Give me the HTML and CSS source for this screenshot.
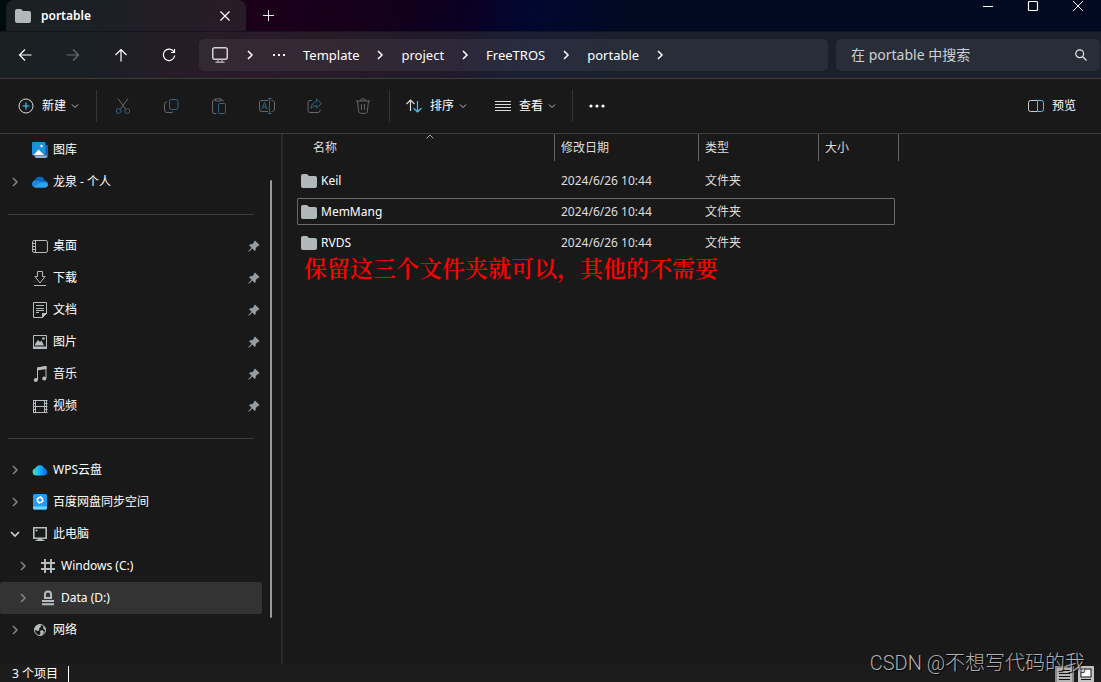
FILE: index.html
```html
<!DOCTYPE html>
<html lang="zh-CN">
<head>
<meta charset="utf-8">
<title>portable</title>
<link rel="stylesheet" href="styles.css">
</head>
<body>
<svg class="defs" aria-hidden="true">
  <symbol id="folder" viewBox="0 0 16 14"><path d="M0 2Q0 0 2 0H5.500Q6.500 0 7 1L8 2H14Q16 2 16 4V12Q16 14 14 14H2Q0 14 0 12Z" fill="#b2b8ba"/></symbol>
  <symbol id="right" viewBox="0 0 10 10"><path d="M3 1 7 5 3 9" fill="none" stroke="currentColor" stroke-width="1.500"/></symbol>
  <symbol id="down" viewBox="0 0 10 10"><path d="M1 3 5 7 9 3" fill="none" stroke="currentColor" stroke-width="1.700"/></symbol>
  <symbol id="small-down" viewBox="0 0 8 8"><path d="M1 2.500 4 5.500 7 2.500" fill="none" stroke="currentColor"/></symbol>
  <symbol id="pin" viewBox="0 0 12 12"><path d="M7 0.500 11.500 5 10.500 6 9.800 5.900 7.800 8 7.700 10 6.700 11 4.200 8.500 1 11.700.3 11 3.500 7.800 1 5.300 2 4.300 4 4.200 6.100 2.200 6 1.500Z" fill="#939da3"/></symbol>
</svg>
<div class="window">
  <header class="chrome">
    <div class="titlebar">
      <div class="tab">
        <svg class="folder"><use href="#folder"/></svg>
        <span class="tab-name">portable</span>
        <button class="bare" aria-label="关闭标签页"><svg width="10" height="10" viewBox="0 0 10 10"><path d="M.5.5 9.500 9.500M9.500.5.500 9.500" stroke="#fff" stroke-width="1.200"/></svg></button>
      </div>
      <button class="bare new-tab" aria-label="新标签页"><svg width="11" height="11" viewBox="0 0 11 11"><path d="M5.500 0V11M0 5.500H11" stroke="#e8e8ee"/></svg></button>
      <div class="win-controls">
        <button class="bare" aria-label="最小化"><svg width="12" height="12" viewBox="0 0 12 12"><path d="M1 6.500H11" stroke="#fff"/></svg></button>
        <button class="bare" aria-label="最大化"><svg width="12" height="12" viewBox="0 0 12 12"><rect x="1.500" y="1.500" width="9" height="9" rx="1" fill="none" stroke="#fff" stroke-width="1.200"/></svg></button>
        <button class="bare" aria-label="关闭"><svg width="12" height="12" viewBox="0 0 12 12"><path d="M1 1 11 11M11 1 1 11" stroke="#fff"/></svg></button>
      </div>
    </div>
    <div class="navbar">
      <div class="history">
        <button class="bare" aria-label="后退"><svg width="14" height="14" viewBox="0 0 14 14"><path d="M13.500 7H1.500M7 1.500 1.500 7 7 12.500"/></svg></button>
        <button class="bare" aria-label="前进" disabled><svg width="14" height="14" viewBox="0 0 14 14"><path d="M.5 7H12.500M7 1.500 12.500 7 7 12.500"/></svg></button>
        <button class="bare" aria-label="上移"><svg width="14" height="14" viewBox="0 0 14 14"><path d="M7 13.500V1.500M1.500 7 7 1.500 12.500 7"/></svg></button>
        <button class="bare" aria-label="刷新"><svg width="14" height="14" viewBox="0 0 14 14"><path d="M12 4A5.700 5.700 0 1 0 12.700 7.500M12.500 1V4.500H9"/></svg></button>
      </div>
      <nav class="address" aria-label="地址">
        <svg class="computer" width="16" height="16" viewBox="0 0 16 16"><rect x=".75" y=".75" width="14.500" height="11.500" rx="2" fill="none" stroke="#d5d0d8" stroke-width="1.500"/><path d="M6 12.500V15M10 12.500V15M3.500 15.200H12.500" stroke="#aaa4ad" stroke-width="1.400"/></svg>
        <svg class="chev"><use href="#right"/></svg>
        <button class="bare" aria-label="更多位置"><svg width="12" height="4" viewBox="0 0 12 4"><path d="M0 1h2v2H0zM5 1h2v2H5zM10 1h2v2h-2z" fill="#fff"/></svg></button>
        <a href="#">Template</a><svg class="chev"><use href="#right"/></svg>
        <a href="#">project</a><svg class="chev"><use href="#right"/></svg>
        <a href="#">FreeTROS</a><svg class="chev"><use href="#right"/></svg>
        <a href="#">portable</a><svg class="chev"><use href="#right"/></svg>
      </nav>
      <label class="search">
        <input type="text" placeholder="在 portable 中搜索" aria-label="在 portable 中搜索">
        <svg width="12" height="12" viewBox="0 0 12 12"><circle cx="4.700" cy="4.700" r="3.900" fill="none" stroke="#e6e8ea" stroke-width="1.200"/><path d="M7.500 7.500 11.500 11.500" stroke="#e6e8ea" stroke-width="1.300"/></svg>
      </label>
    </div>
  </header>

  <div class="toolbar">
    <button class="tool"><svg width="16" height="16" viewBox="0 0 16 16"><circle cx="8" cy="8" r="7" stroke="#ddd"/><path d="M8 4.500V11.500M4.500 8H11.500" stroke="#4cc2ff" stroke-width="1.200"/></svg>新建<svg class="caret"><use href="#small-down"/></svg></button>
    <div class="edit-tools">
      <button class="bare" aria-label="剪切" disabled><svg width="16" height="16" viewBox="0 0 16 16"><path d="M3 .5 10.500 11M13 .5 5.500 11" stroke="#686868"/><circle cx="3.700" cy="13" r="2.400" stroke="#2d6680"/><circle cx="12.300" cy="13" r="2.400" stroke="#2d6680"/></svg></button>
      <button class="bare" aria-label="复制" disabled><svg width="16" height="16" viewBox="0 0 16 16"><rect x="6.500" y="1.500" width="8.500" height="10" rx="1.800" stroke="#2d6680"/><path d="M4 4H3.500A2 2 0 0 0 1.500 6V12A2.500 2.500 0 0 0 4 14.500H8A2 2 0 0 0 10 13.500" stroke="#686868"/></svg></button>
      <button class="bare" aria-label="粘贴" disabled><svg width="16" height="16" viewBox="0 0 16 16"><path d="M4.500 2H3A1.500 1.500 0 0 0 1.500 3.500V14A1.500 1.500 0 0 0 3 15.500H5.500M10.500 2H11A1.500 1.500 0 0 1 12.500 3.500M4.500 .8H10V3H4.500Z" stroke="#686868"/><rect x="7.500" y="5.500" width="7" height="10" rx="1" stroke="#2d6680"/></svg></button>
      <button class="bare" aria-label="重命名" disabled><svg width="16" height="16" viewBox="0 0 16 16"><path d="M9 2.500H3A2 2 0 0 0 .5 4.500V11.500A2 2 0 0 0 2.500 13.500H9M12.500 2.500A2.500 2.500 0 0 1 15.500 5V11A2.500 2.500 0 0 1 12.500 13.500" stroke="#686868"/><path d="M9 .5H12.500M10.500.5V15.500M9 15.500H12.500M2.800 11.500 5.500 4.500 8.200 11.500M3.800 9H7.200" stroke="#2d6680"/></svg></button>
      <button class="bare" aria-label="共享" disabled><svg width="16" height="16" viewBox="0 0 16 16"><path d="M5 2.500H3A2 2 0 0 0 1 4.500V12.500A2 2 0 0 0 3 14.500H11A2 2 0 0 0 13 12.500V11.500" stroke="#686868"/><path d="M9.500 1 14.500 5.500 9.500 10V7.500Q6 7.500 4 10.500 4.500 4.500 9.500 3.800Z" stroke="#2d6680"/></svg></button>
      <button class="bare" aria-label="删除" disabled><svg width="16" height="16" viewBox="0 0 16 16"><path d="M1 3H15M5.500 3Q5.500.700 8 .700T10.500 3M2.500 3 3.700 13.500Q3.900 15.300 5.500 15.300H10.500Q12.100 15.300 12.300 13.500L13.500 3M6.500 6V12M9.500 6V12" stroke="#686868"/></svg></button>
    </div>
    <div class="view-tools">
      <button class="tool"><svg width="16" height="16" viewBox="0 0 16 16"><path d="M4.500 13V2M.5 6 4.500 2 8.500 6" stroke="#ddd" stroke-width="1.200"/><path d="M11.500 3V14M7.500 10 11.500 14 15.500 10" stroke="#4cc2ff" stroke-width="1.200"/></svg>排序<svg class="caret"><use href="#small-down"/></svg></button>
      <button class="tool"><svg width="16" height="16" viewBox="0 0 16 16"><path d="M0 3.500H16M0 6.500H16M0 9.500H16M0 12.500H16" stroke="#ddd"/></svg>查看<svg class="caret"><use href="#small-down"/></svg></button>
    </div>
    <button class="bare more" aria-label="查看更多"><svg width="16" height="4" viewBox="0 0 16 4"><circle cx="2" cy="2" r="1.600" fill="#fff"/><circle cx="8" cy="2" r="1.600" fill="#fff"/><circle cx="14" cy="2" r="1.600" fill="#fff"/></svg></button>
    <button class="tool preview"><svg width="16" height="16" viewBox="0 0 16 16"><path d="M9 2.500H2.500A2 2 0 0 0 .5 4.500V11.500A2 2 0 0 0 2.500 13.500H9" stroke="#ccc"/><path d="M9.500 2.500H13.500A2 2 0 0 1 15.500 4.500V11.500A2 2 0 0 1 13.500 13.500H9.500Z" stroke="#4cc2ff"/></svg>预览</button>
  </div>

  <main class="body">
    <nav class="sidebar" aria-label="导航窗格">
      <ul class="tree">
        <li><a href="#"><span class="twist"></span><svg class="icon" viewBox="0 0 16 16"><path d="M3 3H16V14Q16 16 14 16H3Z" fill="#0c62b4"/><path d="M2 13.500H15.500L14 16H4Z" fill="#79b9ec"/><rect width="13.500" height="13.500" rx="1" fill="#1b91db"/><path d="M1.500 13 6.700 7.500 12 13Z" fill="#fff"/><circle cx="9.500" cy="4" r="1.200" fill="#fff"/></svg>图库</a></li>
        <li><a href="#"><svg class="twist"><use href="#right"/></svg><svg class="icon" viewBox="0 0 16 16"><path d="M4 13A3.800 3.800 0 0 1 3 5.700 5.200 5.200 0 0 1 12.700 6.500 3.400 3.400 0 0 1 12.500 13.500Z" fill="#0868bf"/><path d="M3.500 13.500A3.500 3.500 0 0 1 0 9.500Q1 6 4.500 6.500L16 10Q15.500 13.500 12.500 13.500Z" fill="#168ae0"/><path d="M2 13 9 8.500Q14 7 16 10.500 15.500 13.500 12.500 13.500H3.500Z" fill="#2ba6ed"/></svg>龙泉 - 个人</a></li>
        <li class="rule"></li>
        <li><a href="#"><span class="twist"></span><svg class="icon" viewBox="0 0 16 16"><rect x=".6" y="2.500" width="14.800" height="12" rx="1.500"/><path d="M3.500 2.500V14.500M.5 5.500H3.500M.5 8.500H3.500M.5 11.500H3.500"/></svg>桌面<svg class="pin"><use href="#pin"/></svg></a></li>
        <li><a href="#"><span class="twist"></span><svg class="icon" viewBox="0 0 16 16"><path d="M5.500 1.500H10.500V6.500H13L8 13 3 6.500H5.500ZM2 15.500H14"/></svg>下载<svg class="pin"><use href="#pin"/></svg></a></li>
        <li><a href="#"><span class="twist"></span><svg class="icon" viewBox="0 0 16 16"><path d="M1.500.5H14.500V11.500L10.500 15.500H1.500ZM10.500 15.500V11.500H14.500M4 3.500H12M4 6.500H12M4 8.500H12M4 10.500H7"/><path d="M10.500 11.500H14.500L10.500 15.500Z" fill="#b8bec0"/></svg>文档<svg class="pin"><use href="#pin"/></svg></a></li>
        <li><a href="#"><span class="twist"></span><svg class="icon" viewBox="0 0 16 16"><path d="M1.500 1.500H14.500V14H1.500Z"/><path d="M1 12.500H15V15H1ZM3 11.500V10L6 6 8 8 9.500 6.500 12 11.500Z" fill="#b8bec0" stroke="none"/><circle cx="11.500" cy="4.500" r="1.300" fill="#b8bec0" stroke="none"/></svg>图片<svg class="pin"><use href="#pin"/></svg></a></li>
        <li><a href="#"><span class="twist"></span><svg class="icon" viewBox="0 0 16 16"><path d="M5.500 14V2L14 .5V12M5.500 3 14 1.500"/><path d="M5 1.500 14.500 0V3L5 4.500Z" fill="#b8bec0" stroke="none"/><circle cx="3.800" cy="14" r="2" fill="#b8bec0" stroke="none"/><circle cx="12.300" cy="12.500" r="2" fill="#b8bec0" stroke="none"/></svg>音乐<svg class="pin"><use href="#pin"/></svg></a></li>
        <li><a href="#"><span class="twist"></span><svg class="icon" viewBox="0 0 16 16"><path d="M1.500 2V15M3.500 2V15M12.500 2V15M14.500 2V15M1 2.500H15.500M1 14.500H15.500M3.500 8.500H12.500M1 5.500H3.500M1 8.500H3.500M1 11.500H3.500M12.500 5.500H15.500M12.500 8.500H15.500M12.500 11.500H15.500"/></svg>视频<svg class="pin"><use href="#pin"/></svg></a></li>
        <li class="rule"></li>
        <li><a href="#"><svg class="twist"><use href="#right"/></svg><svg class="icon" viewBox="0 0 16 16"><defs><linearGradient id="cloud"><stop stop-color="#43e4ba"/><stop offset=".45" stop-color="#18b7ff"/><stop offset="1" stop-color="#0864e8"/></linearGradient></defs><path d="M4.500 13.500A3.700 3.700 0 0 1 3.500 6.200 4.700 4.700 0 0 1 12.300 6.200 3.700 3.700 0 0 1 11.500 13.500Z" fill="url(#cloud)" stroke="none"/></svg>WPS云盘</a></li>
        <li><a href="#"><svg class="twist"><use href="#right"/></svg><svg class="icon" viewBox="0 0 16 16"><rect x="1" width="14" height="15.500" rx="1.500" fill="#249bf2" stroke="none"/><path d="M1 12.500H15V14Q15 15.500 13.500 15.500H2.500Q1 15.500 1 14Z" fill="#66d7ff" stroke="none"/><path d="M8 2.500 11.500 6 8 9.500 4.500 6Z" stroke="#fff" stroke-width="1.800" stroke-dasharray="4 1"/></svg>百度网盘同步空间</a></li>
        <li><a href="#"><svg class="twist open"><use href="#down"/></svg><svg class="icon" viewBox="0 0 16 16"><path d="M1.800 1.800H14.200V12.200H1.800Z" stroke-width="1.600"/><path d="M3.500 4.500H5.500M4.500 3.500V5.500M5.500 13.500H10.500M3.500 14.500H12.500" /></svg>此电脑</a></li>
        <li><a href="#" class="nested"><svg class="twist"><use href="#right"/></svg><svg class="icon" viewBox="0 0 16 16"><path d="M5 1V15M11 1V15M1 5H15M1 11H15" stroke-width="1.900"/></svg>Windows (C:)</a></li>
        <li><a href="#" class="nested selected" aria-current="true"><svg class="twist"><use href="#right"/></svg><svg class="icon" viewBox="0 0 16 16"><path d="M5 8.500V4Q5 1.500 8 1.500T11 4V8.500M4 8H12" stroke-width="1.900"/><path d="M2 11H14M2 14.300H14" stroke-width="1.900"/></svg>Data (D:)</a></li>
        <li><a href="#"><svg class="twist"><use href="#right"/></svg><svg class="icon" viewBox="0 0 16 16"><circle cx="8" cy="8" r="5.500"/><path d="M3 5Q5 2 8.500 2.500L9 4.500 7 6.500 7.500 8 5.500 9 2.500 7.500ZM8 9 10.500 8 12 10 9.500 13.500 8 13 8.500 11ZM11 4 13 5.500 13.500 8 11.500 7Z" fill="#b8bec0" stroke="none"/></svg>网络</a></li>
      </ul>
      <div class="scroll"></div>
    </nav>
    <section class="files">
      <table>
        <thead><tr><th scope="col">名称<svg class="sort" viewBox="0 0 8 5"><path d="M.5 4.500 4 1 7.500 4.500" fill="none" stroke="#aaa"/></svg></th><th scope="col">修改日期</th><th scope="col">类型</th><th scope="col">大小</th></tr></thead>
        <tbody>
          <tr><td><svg class="folder"><use href="#folder"/></svg>Keil</td><td>2024/6/26 10:44</td><td>文件夹</td><td></td></tr>
          <tr class="focused"><td><svg class="folder"><use href="#folder"/></svg>MemMang</td><td>2024/6/26 10:44</td><td>文件夹</td><td></td></tr>
          <tr><td><svg class="folder"><use href="#folder"/></svg>RVDS</td><td>2024/6/26 10:44</td><td>文件夹</td><td></td></tr>
        </tbody>
      </table>
      <p class="note">保留这三个文件夹就可以，其他的不需要</p>
    </section>
  </main>

  <footer class="status">
    <span class="count">3 个项目</span>
    <div class="modes">
      <button class="bare" aria-label="详细信息"><svg width="19" height="17" viewBox="0 0 19 17"><rect x="1" y="1" width="17" height="20" fill="#b4b4b4" stroke="#8a8a8a" stroke-width="2"/><path d="M4 4.500H15M4 7.500H15M4 10.500H15M4 13.500H15" stroke="#111"/></svg></button>
      <button class="bare" aria-label="大图标"><svg width="16" height="17" viewBox="0 0 16 17"><rect width="16" height="20" rx="1" fill="#c4c4c4"/><rect x="3" y="3" width="10" height="8" fill="#fff" stroke="#111"/><path d="M3 13.500H13" stroke="#111"/></svg></button>
    </div>
  </footer>
  <div class="watermark">CSDN @不想写代码的我</div>
</div>
</body>
</html>
```

FILE: styles.css
```css
* { box-sizing: border-box; }
body {
  margin: 0;
  background: #191919;
  color: #fff;
  font: 12px/16px "Noto Sans", "Noto Sans CJK SC", sans-serif;
}
svg { display: block; flex: none; fill: none; }
a { color: inherit; text-decoration: none; }
ul { list-style: none; margin: 0; padding: 0; }
button { font: inherit; color: inherit; background: none; border: 0; padding: 0; }
.defs { position: absolute; width: 0; height: 0; }
.bare { display: flex; align-items: center; justify-content: center; }
.window { position: relative; height: 100vh; display: flex; flex-direction: column; overflow: hidden; }
.folder { width: 16px; height: 14px; }

.chrome {
  border-bottom: 1px solid #3c3c3c;
  background: linear-gradient(100deg, #000b0e 0%, #000a14 9%, #130416 16%, #1c001b 24%, #150019 33%, #0b0022 42%, #000831 48%, #000a20 57%);
}
.titlebar { height: 31px; display: flex; }
.tab {
  width: 240px;
  margin-left: 6px;
  padding: 0 16px 0 9px;
  display: flex;
  align-items: center;
  gap: 10px;
  border-radius: 8px 8px 0 0;
  background: rgba(57, 57, 57, .47);
  font-weight: 600;
}
.tab-name { flex: 1; }
.new-tab { width: 45px; }
.win-controls { margin-left: auto; padding-right: 1px; display: flex; height: 12px; }
.win-controls .bare { width: 45px; }
.navbar {
  display: flex;
  align-items: center;
  height: 47px;
  padding-right: 1px;
  border-top: 1px solid rgba(10, 10, 25, .5);
  background: rgba(57, 57, 57, .47);
}
.history { display: flex; width: 199px; padding-left: 1px; }
.history .bare { width: 48px; height: 32px; }
.history path { stroke: #fff; stroke-width: 1.2; }
.history .bare:disabled path { stroke: #6b6b70; }
.address {
  flex: 1;
  display: flex;
  align-items: center;
  height: 32px;
  padding-left: 13px;
  border-radius: 5px;
  background: rgba(255, 255, 255, .06);
  font-size: 13px;
}
.address a { padding: 0 16px; }
.address .bare { padding: 0 2px 0 18px; }
.computer { margin-right: 17px; }
.chev { width: 10px; height: 10px; }
.search {
  width: 264px;
  height: 32px;
  margin-left: 8px;
  padding: 0 13px 0 15px;
  display: flex;
  align-items: center;
  border-radius: 5px;
  background: rgba(255, 255, 255, .06);
}
.search input {
  flex: 1;
  min-width: 0;
  padding: 0;
  border: 0;
  outline: 0;
  background: none;
  color: #fff;
  font: inherit;
  font-size: 14px;
}
.search input::placeholder { color: #cdd0d4; opacity: 1; }

.toolbar {
  height: 55px;
  flex: none;
  display: flex;
  align-items: center;
  padding: 0 25px 0 18px;
  border-bottom: 1px solid #3c3c3c;
}
.tool { display: flex; align-items: center; gap: 8px; }
.caret { width: 8px; height: 8px; margin-left: -3px; color: #bbb; }
.edit-tools, .view-tools { display: flex; align-items: center; height: 32px; border-left: 1px solid #333; }
.edit-tools { margin-left: 17px; padding-left: 2px; }
.edit-tools .bare { width: 48px; }
.view-tools { margin-left: 2px; padding: 0 16px; gap: 28px; border-right: 1px solid #333; }
.more { margin-left: 16px; }
.preview { margin-left: auto; }

.body { flex: 1; min-height: 0; display: flex; }
.sidebar { width: 283px; flex: none; display: flex; border-right: 2px solid #292929; }
.tree { width: 262px; }
.tree a { display: flex; align-items: center; height: 32px; padding: 0 2px 0 10px; }
.tree .nested { padding-left: 18px; }
.tree .selected { background: #333; border-radius: 2px; }
.twist { width: 10px; height: 10px; margin-right: 12px; color: #858585; }
.twist.open { color: #ccc; }
.icon { width: 16px; height: 16px; margin-right: 5px; stroke: #b8bec0; }
.tree li:nth-child(-n+2) .icon { stroke: none; }
.pin { width: 12px; height: 12px; margin-left: auto; }
.rule { height: 32px; padding: 16px 8px 0; }
.rule::before { content: ""; display: block; height: 1px; background: #3c3c3c; }
.scroll { width: 2px; margin: 46px 0 46px 8px; background: #9a9a9a; border-radius: 1px; }

.files { flex: 1; min-width: 0; padding-left: 14px; }
table, thead, tbody { display: block; }
tr { display: grid; grid-template-columns: 258px 144px 120px 76px; width: 598px; }
thead tr { grid-template-columns: 258px 144px 120px 80px; width: 602px; }
th, td { padding: 0 6px; display: flex; align-items: center; font-weight: 400; color: #dedede; }
th { height: 27px; border-right: 1px solid #636363; }
th:first-child { position: relative; padding-left: 16px; }
.sort { position: absolute; top: 0; left: 129px; width: 8px; height: 5px; }
tbody { padding-top: 6px; display: grid; gap: 4px; }
tbody tr { height: 27px; }
td:first-child { padding-left: 4px; gap: 4px; color: #fff; }
.focused { outline: 1px solid #6b6b6b; outline-offset: -1px; border-radius: 1px; }
.note {
  margin: 0 0 0 7px;
  color: #f00;
  font: 600 23px/24px "Noto Serif CJK SC", "Noto Sans CJK SC", serif;
}

.status { flex: none; height: 18px; display: flex; padding: 2px 7px 0 12px; background: #1c1c1c; }
.count { padding-right: 10px; border-right: 1px solid #fff; line-height: 16px; }
.modes { margin: 0 0 0 auto; display: flex; gap: 4px; }
.watermark {
  position: absolute;
  right: 16px;
  bottom: 5px;
  color: rgba(205, 205, 205, .85);
  font: 300 20px/28px "Liberation Sans Narrow", Roboto, "Noto Sans CJK SC", sans-serif;
  text-shadow: 1px 1px 1px #000;
}
```
